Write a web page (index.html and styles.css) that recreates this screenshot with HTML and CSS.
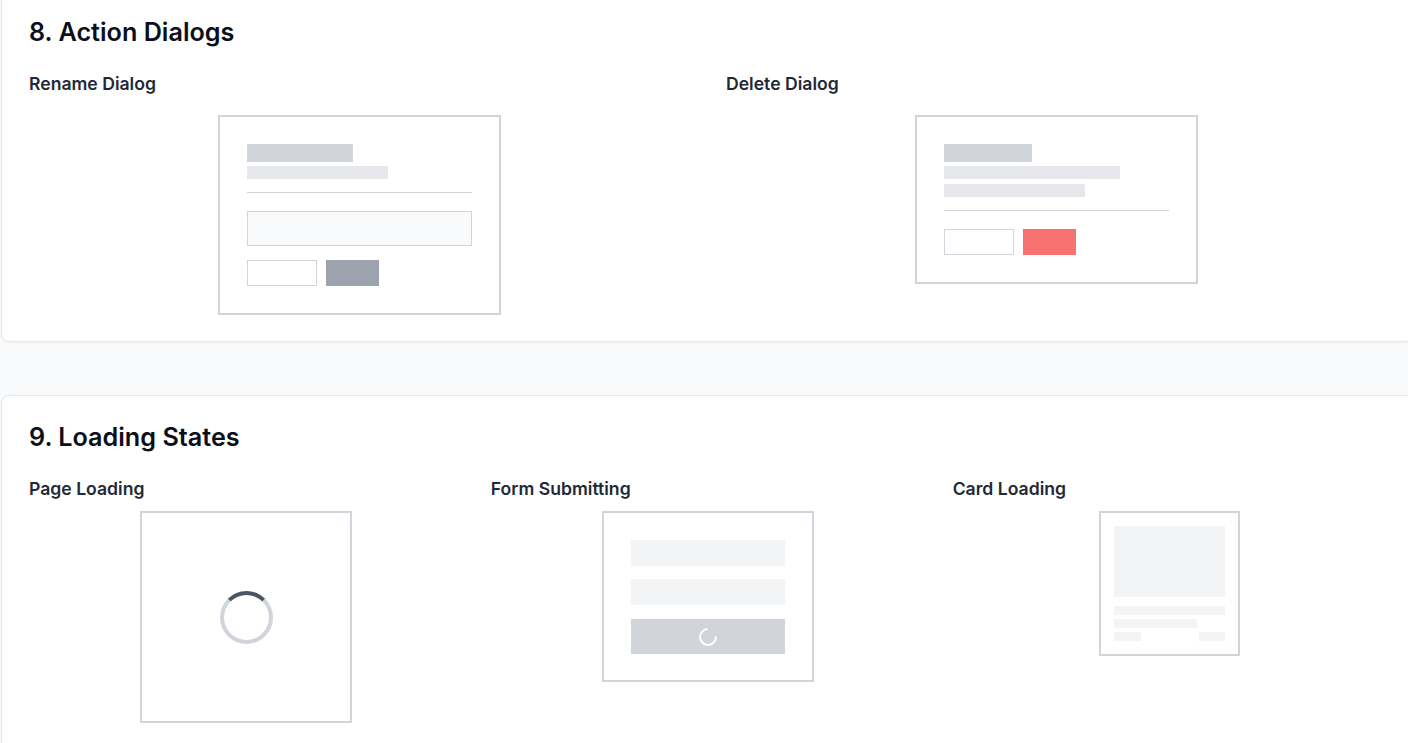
FILE: index.html
```html
<!DOCTYPE html>
<html lang="en">
<head>
<meta charset="utf-8">
<title>Wireframes</title>
<link rel="stylesheet" href="styles.css">
</head>
<body>
<main class="page">
  <section class="card">
    <h2 class="card-title">8. Action Dialogs</h2>
    <div class="grid grid-2">
      <div class="item">
        <h3 class="label">Rename Dialog</h3>
        <div class="preview preview-dialogs">
          <div class="frame dialog">
            <div class="sk sk-title sk-w106"></div>
            <div class="sk sk-line sk-w141 mt4"></div>
            <div class="divider mt13"></div>
            <div class="input mt18"></div>
            <div class="btn-row mt14">
              <div class="btn btn-outline"></div>
              <div class="btn btn-primary"></div>
            </div>
          </div>
        </div>
      </div>
      <div class="item">
        <h3 class="label">Delete Dialog</h3>
        <div class="preview preview-dialogs">
          <div class="frame dialog">
            <div class="sk sk-title sk-w88"></div>
            <div class="sk sk-line sk-w176 mt4"></div>
            <div class="sk sk-line sk-w141 mt5"></div>
            <div class="divider mt13"></div>
            <div class="btn-row mt18">
              <div class="btn btn-outline"></div>
              <div class="btn btn-danger"></div>
            </div>
          </div>
        </div>
      </div>
    </div>
  </section>

  <section class="card">
    <h2 class="card-title">9. Loading States</h2>
    <div class="grid grid-3">
      <div class="item">
        <h3 class="label">Page Loading</h3>
        <div class="preview preview-loading">
          <div class="frame page-loading">
            <div class="spinner"></div>
          </div>
        </div>
      </div>
      <div class="item">
        <h3 class="label">Form Submitting</h3>
        <div class="preview preview-loading">
          <div class="frame form-loading">
            <div class="field"></div>
            <div class="field mt13"></div>
            <div class="submit mt14"><div class="mini-spinner"></div></div>
          </div>
        </div>
      </div>
      <div class="item">
        <h3 class="label">Card Loading</h3>
        <div class="preview preview-loading">
          <div class="frame card-loading">
            <div class="cl-image"></div>
            <div class="cl-line cl-full mt9"></div>
            <div class="cl-line cl-short mt4"></div>
            <div class="cl-foot mt4">
              <div class="cl-line cl-w27"></div>
              <div class="cl-line cl-w26"></div>
            </div>
          </div>
        </div>
      </div>
    </div>
  </section>
</main>
</body>
</html>
```

FILE: styles.css
```css
* { box-sizing: border-box; }

html, body {
  margin: 0;
  padding: 0;
  background: #f9fafb;
  overflow: hidden;
}

body {
  font-family: Inter, "Noto Sans", "Liberation Sans", sans-serif;
  color: #111827;
}

.page {
  margin-top: -10px;
  margin-left: 1px;
  width: 1414px;
}

.card {
  background: #ffffff;
  border: 1px solid #e5e7eb;
  border-radius: 8px;
  box-shadow: 0 1px 2px rgba(0, 0, 0, 0.05);
  padding: 25px 27px 25px 27px;
  margin-bottom: 53px;
}

.card-title {
  margin: 0 0 24px 0;
  font-size: 25.2px;
  line-height: 32px;
  font-weight: 600;
  color: #0b0f19;
}

.grid { display: grid; }
.grid-2 { grid-template-columns: 1fr 1fr; column-gap: 36px; }
.grid-3 { grid-template-columns: 1fr 1fr 1fr; column-gap: 27.5px; }

.label {
  margin: 0;
  font-size: 17.6px;
  line-height: 24px;
  font-weight: 600;
  color: #1f2937;
}

.preview {
  display: flex;
  justify-content: center;
  align-items: flex-start;
}
.preview-dialogs { padding-top: 19px; padding-bottom: 1px; }
.preview-loading { padding-top: 10px; }

.frame {
  border: 2px solid #d1d5db;
  background: #ffffff;
}

/* dialogs */
.dialog {
  width: 283px;
  padding: 27px 27px 26px 27px;
  display: flex;
  flex-direction: column;
  align-items: flex-start;
}
.dialog .btn-row { margin-bottom: 1px; }

.sk { flex: none; }
.sk-title { height: 18px; background: #d1d5db; }
.sk-line { height: 13px; background: #e5e7eb; }
.sk-w106 { width: 106px; }
.sk-w88 { width: 88px; }
.sk-w141 { width: 141px; }
.sk-w176 { width: 176px; }

.divider {
  align-self: stretch;
  height: 1px;
  background: #d1d5db;
}

.input {
  align-self: stretch;
  height: 35px;
  background: #f9fafb;
  border: 1px solid #d1d5db;
}

.btn-row { display: flex; gap: 9px; }
.btn { height: 26px; }
.btn-outline { width: 70px; background: #ffffff; border: 1px solid #d1d5db; }
.btn-primary { width: 53px; background: #9ca3af; }
.btn-danger { width: 53px; background: #f87171; }

.mt4 { margin-top: 4px; }
.mt5 { margin-top: 5px; }
.mt9 { margin-top: 9px; }
.mt13 { margin-top: 13px; }
.mt14 { margin-top: 14px; }
.mt18 { margin-top: 18px; }

/* loading */
.page-loading {
  width: 212px;
  height: 212px;
  display: flex;
  align-items: center;
  justify-content: center;
}

.spinner {
  width: 53px;
  height: 53px;
  border-radius: 50%;
  border: 4px solid #d1d5db;
  border-top-color: #4b5563;
}

.form-loading {
  width: 212px;
  padding: 27px 27px 26px 27px;
}

.field {
  height: 26px;
  background: #f3f4f6;
}

.submit {
  height: 35px;
  background: #d1d5db;
  display: flex;
  align-items: center;
  justify-content: center;
}

.mini-spinner {
  width: 18px;
  height: 18px;
  border-radius: 50%;
  border: 2px solid #ffffff;
  border-top-color: transparent;
  transform: rotate(40deg);
}

.card-loading {
  width: 141px;
  padding: 13px;
}

.cl-image { height: 71px; background: #f3f4f6; }
.cl-line { height: 9px; background: #f3f4f6; }
.cl-full { width: 100%; }
.cl-short { width: 83px; }
.cl-foot { display: flex; justify-content: space-between; }
.cl-w27 { width: 27px; }
.cl-w26 { width: 26px; }
```
